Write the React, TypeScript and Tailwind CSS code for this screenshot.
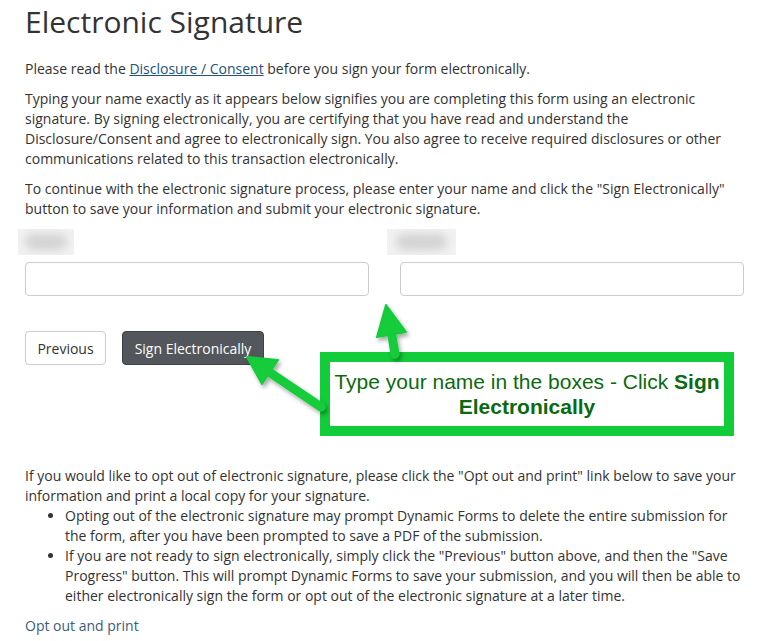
import React from "react";

const BlurLabel = ({ width }: { width: string }) => (
  <div className={`h-[26px] ${width} bg-[#f2f2f2] overflow-hidden flex items-center justify-center`}>
    <div className="h-[16px] w-[75%] bg-[#d2d2d2] rounded-full blur-[5px]" />
  </div>
);

const Arrows = () => (
  <svg className="absolute inset-0 pointer-events-none" width="773" height="641" viewBox="0 0 773 641">
    <defs>
      <filter id="sh" x="-20%" y="-20%" width="140%" height="140%">
        <feDropShadow dx="2" dy="3" stdDeviation="2" floodColor="#000" floodOpacity="0.35" />
      </filter>
    </defs>
    <g filter="url(#sh)" fill="#12cc3a" stroke="#12cc3a" strokeLinejoin="round">
      <line x1="321" y1="407" x2="266" y2="370" strokeWidth="9" strokeLinecap="round" />
      <polygon points="247,357 278,360 262,384" strokeWidth="2" />
      <line x1="395" y1="354" x2="391" y2="330" strokeWidth="9" strokeLinecap="round" />
      <polygon points="386,305 406,332 377,337" strokeWidth="2" />
    </g>
  </svg>
);

export default function App() {
  return (
    <div className="relative w-[773px] h-[641px] overflow-hidden bg-white text-[#333] font-['Open_Sans',sans-serif]">
      <div className="pl-[25px] pr-[29px]">
        <h1 className="mt-[5px] text-[30px] leading-[33px] font-normal text-[#333]">Electronic Signature</h1>

        <div className="mt-[21px] text-[14px] leading-[20px]">
          <p className="mb-[10px]">
            Please read the{" "}
            <span className="text-[#23527c] underline">Disclosure / Consent</span>{" "}
            before you sign your form electronically.
          </p>
          <p className="mb-[10px]">
            Typing your name exactly as it appears below signifies you are completing this form using an electronic
            signature. By signing electronically, you are certifying that you have read and understand the
            Disclosure/Consent and agree to electronically sign. You also agree to receive required disclosures or
            other communications related to this transaction electronically.
          </p>
          <p className="mb-[10px]">
            To continue with the electronic signature process, please enter your name and click the "Sign
            Electronically" button to save your information and submit your electronic signature.
          </p>
        </div>

        <div className="mt-[6px] grid grid-cols-2 gap-[31px]">
          <div className="flex flex-col">
            <div className="-ml-[7px] mb-[7px]">
              <BlurLabel width="w-[56px]" />
            </div>
            <div className="h-[34px] border border-[#ccc] rounded-[4px] bg-white" />
          </div>
          <div className="flex flex-col">
            <div className="-ml-[13px] mb-[7px]">
              <BlurLabel width="w-[69px]" />
            </div>
            <div className="h-[34px] border border-[#ccc] rounded-[4px] bg-white" />
          </div>
        </div>

        <div className="relative mt-[35px] h-[135px]">
          <div className="flex gap-[16px]">
            <button className="h-[34px] w-[81px] border border-[#ccc] rounded-[4px] bg-white text-[14px] text-[#333]">
              Previous
            </button>
            <button className="h-[34px] w-[142px] border border-[#3f4246] rounded-[4px] bg-[#53575b] text-[14px] text-white">
              Sign Electronically
            </button>
          </div>
          <div className="absolute left-[295px] top-[21px] w-[414px] h-[84px] border-[10px] border-[#12cc3a] bg-white flex items-center justify-center">
            <p className="text-center font-['Liberation_Sans',Arial,sans-serif] text-[21px] leading-[25px] text-[#0b6a0f]">
              Type your name in the boxes - Click <b>Sign</b>
              <br />
              <b>Electronically</b>
            </p>
          </div>
        </div>

        <div className="text-[14px] leading-[20px]">
          <p>
            If you would like to opt out of electronic signature, please click the "Opt out and print" link below to
            save your information and print a local copy for your signature.
          </p>
          <ul className="list-disc pl-[40px] mb-[10px]">
            <li>
              Opting out of the electronic signature may prompt Dynamic Forms to delete the entire submission for the
              form, after you have been prompted to save a PDF of the submission.
            </li>
            <li>
              If you are not ready to sign electronically, simply click the "Previous" button above, and then the "Save
              Progress" button. This will prompt Dynamic Forms to save your submission, and you will then be able to
              either electronically sign the form or opt out of the electronic signature at a later time.
            </li>
          </ul>
          <p className="text-[#3a5d7c]">Opt out and print</p>
        </div>
      </div>
      <Arrows />
    </div>
  );
}
